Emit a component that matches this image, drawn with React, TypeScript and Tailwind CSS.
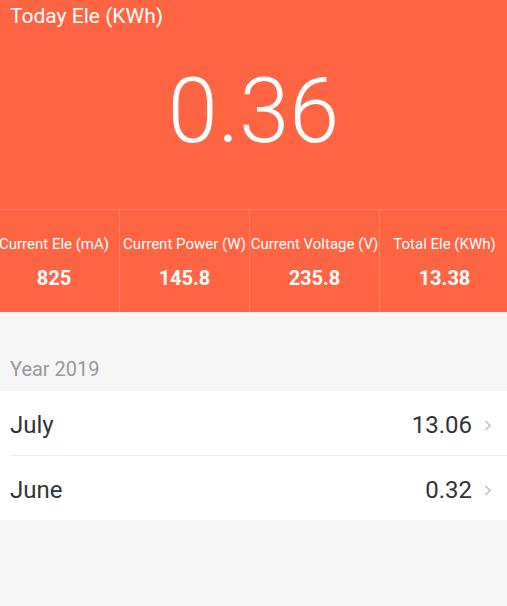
import React from "react";

const stats = [
  { label: "Current Ele (mA)", value: "825" },
  { label: "Current Power (W)", value: "145.8" },
  { label: "Current Voltage (V)", value: "235.8" },
  { label: "Total Ele (KWh)", value: "13.38" },
];

const months = [
  { name: "July", value: "13.06" },
  { name: "June", value: "0.32" },
];

function Chevron() {
  return (
    <svg width="8" height="11" viewBox="0 0 8 11" className="shrink-0">
      <polyline points="1.5,1 6,5.5 1.5,10" fill="none" stroke="#bdbdbd" strokeWidth="1.4" />
    </svg>
  );
}

export default function App() {
  return (
    <div className="w-[507px] h-[606px] bg-[#f6f6f6] overflow-hidden" style={{ fontFamily: "Roboto, 'Noto Sans', sans-serif" }}>
      <div className="bg-[#ff6443] text-white">
        <div className="h-[209px] flex flex-col">
          <div className="pt-[2px] pl-[10px] text-[21px] leading-[28px]">Today Ele (KWh)</div>
          <div className="mt-[37px] text-center text-[90px] leading-[90px] font-light">0.36</div>
        </div>
        <div className="border-t border-white/20 overflow-hidden">
          <div className="flex ml-[-11px]">
            {stats.map((s, i) => (
              <div
                key={s.label}
                className={`w-[130px] shrink-0 flex flex-col items-center pt-[24px] pb-[20px] ${i > 0 ? "border-l border-white/20" : ""}`}
              >
                <div className="text-[15px] leading-[20px] whitespace-nowrap">{s.label}</div>
                <div className="mt-[10px] text-[20px] leading-[28px] font-bold">{s.value}</div>
              </div>
            ))}
          </div>
        </div>
      </div>
      <div className="h-[79px] pt-[45px] pl-[10px] text-[20px] leading-[24px] text-[#999999]">Year 2019</div>
      <div className="bg-white">
        {months.map((m, i) => (
          <div key={m.name}>
            {i > 0 && <div className="ml-[10px] h-px bg-[#ececec]" />}
            <div className="h-[64px] pt-[4px] flex items-center pl-[10px] pr-[15px] text-[#333333] text-[24px] leading-[32px]">
              <span className="flex-1">{m.name}</span>
              <span>{m.value}</span>
              <span className="ml-[12px] flex items-center">
                <Chevron />
              </span>
            </div>
          </div>
        ))}
      </div>
    </div>
  );
}
